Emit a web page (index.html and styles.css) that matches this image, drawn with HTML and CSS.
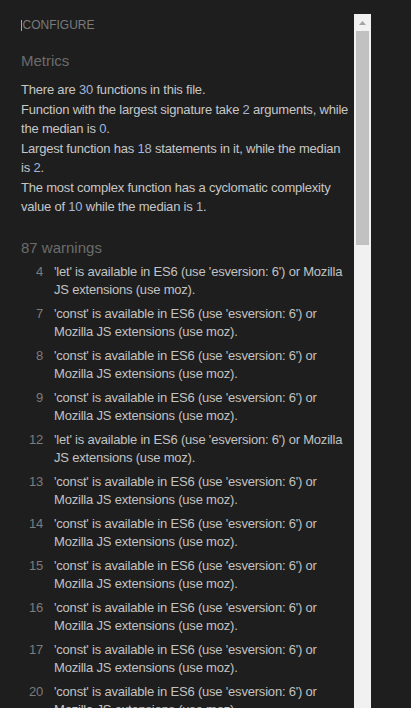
FILE: index.html
```html
<!DOCTYPE html>
<html lang="en">
<head>
<meta charset="utf-8">
<title>JSHint metrics</title>
<link rel="stylesheet" href="styles.css">
</head>
<body>
<div class="layout">
  <main class="panel">
    <div class="configure"><span class="caret"></span>Configure</div>

    <h2 class="heading metrics-heading">Metrics</h2>
    <p>There are <span class="num">30</span> functions in this file.</p>
    <p>Function with the largest signature take <span class="num">2</span> arguments, while the median is <span class="num">0</span>.</p>
    <p>Largest function has <span class="num">18</span> statements in it, while the median is <span class="num">2</span>.</p>
    <p>The most complex function has a cyclomatic complexity value of <span class="num">10</span> while the median is <span class="num">1</span>.</p>

    <h2 class="heading warnings-heading">87 warnings</h2>
    <ul class="warnings">
      <li class="warning"><span class="line">4</span><span class="msg">'let' is available in ES6 (use 'esversion: 6') or Mozilla JS extensions (use moz).</span></li>
      <li class="warning"><span class="line">7</span><span class="msg">'const' is available in ES6 (use 'esversion: 6') or Mozilla JS extensions (use moz).</span></li>
      <li class="warning"><span class="line">8</span><span class="msg">'const' is available in ES6 (use 'esversion: 6') or Mozilla JS extensions (use moz).</span></li>
      <li class="warning"><span class="line">9</span><span class="msg">'const' is available in ES6 (use 'esversion: 6') or Mozilla JS extensions (use moz).</span></li>
      <li class="warning"><span class="line">12</span><span class="msg">'let' is available in ES6 (use 'esversion: 6') or Mozilla JS extensions (use moz).</span></li>
      <li class="warning"><span class="line">13</span><span class="msg">'const' is available in ES6 (use 'esversion: 6') or Mozilla JS extensions (use moz).</span></li>
      <li class="warning"><span class="line">14</span><span class="msg">'const' is available in ES6 (use 'esversion: 6') or Mozilla JS extensions (use moz).</span></li>
      <li class="warning"><span class="line">15</span><span class="msg">'const' is available in ES6 (use 'esversion: 6') or Mozilla JS extensions (use moz).</span></li>
      <li class="warning"><span class="line">16</span><span class="msg">'const' is available in ES6 (use 'esversion: 6') or Mozilla JS extensions (use moz).</span></li>
      <li class="warning"><span class="line">17</span><span class="msg">'const' is available in ES6 (use 'esversion: 6') or Mozilla JS extensions (use moz).</span></li>
      <li class="warning"><span class="line">20</span><span class="msg">'const' is available in ES6 (use 'esversion: 6') or Mozilla JS extensions (use moz).</span></li>
      <li class="warning"><span class="line">21</span><span class="msg">'const' is available in ES6 (use 'esversion: 6') or Mozilla JS extensions (use moz).</span></li>
    </ul>
  </main>

  <div class="scrollbar" aria-hidden="true">
    <div class="sb-btn">
      <svg class="sb-arrow" width="7" height="4" viewBox="0 0 7 4"><path d="M0 4 L3.5 0 L7 4 Z"/></svg>
    </div>
    <div class="sb-thumb"></div>
  </div>
</div>
</body>
</html>
```

FILE: styles.css
```css
html, body {
  margin: 0;
  padding: 0;
}

body {
  background: #1e1e1e;
  height: 708px;
  overflow: hidden;
  font-family: "Liberation Sans", Arial, sans-serif;
  color: #c6c6c6;
}

.layout {
  display: flex;
  align-items: flex-start;
}

.panel {
  width: 354px;
  flex: 0 0 354px;
  box-sizing: border-box;
  padding: 17.4px 3.5px 0 21px;
  font-size: 13px;
  letter-spacing: -0.2px;
}

.configure {
  font-size: 12px;
  line-height: 16px;
  text-transform: uppercase;
  color: #7a7a7a;
  letter-spacing: 0;
}

.caret {
  display: inline-block;
  width: 1px;
  height: 11px;
  margin-right: 0.5px;
  background: #a8a8a8;
  vertical-align: -2px;
}

.heading {
  font-size: 15px;
  line-height: 20px;
  font-weight: normal;
  color: #6c6c6c;
  letter-spacing: 0;
}

.metrics-heading {
  margin: 18px 0 8.5px;
}

.warnings-heading {
  margin: 22px 0 1.7px;
}

p {
  margin: 0 0 1px;
  line-height: 19px;
}

.num {
  color: #a2b6da;
}

.warnings {
  list-style: none;
  margin: 0;
  padding: 0;
}

.warning {
  display: grid;
  grid-template-columns: 22px 1fr;
  column-gap: 11px;
  padding: 3.5px 0;
  line-height: 17.5px;
}

.line {
  text-align: right;
  color: #7c7c7c;
}

.msg {
  color: #c2c2c2;
}

.scrollbar {
  width: 17px;
  flex: 0 0 17px;
  margin-top: 14px;
  height: 720px;
  background: #f1f1f1;
  display: flex;
  flex-direction: column;
}

.sb-btn {
  height: 17px;
  display: flex;
  align-items: center;
  justify-content: center;
}

.sb-arrow {
  display: block;
  fill: #a3a3a3;
}

.sb-thumb {
  height: 214px;
  margin: 0 2px;
  background: #c1c1c1;
}
```
